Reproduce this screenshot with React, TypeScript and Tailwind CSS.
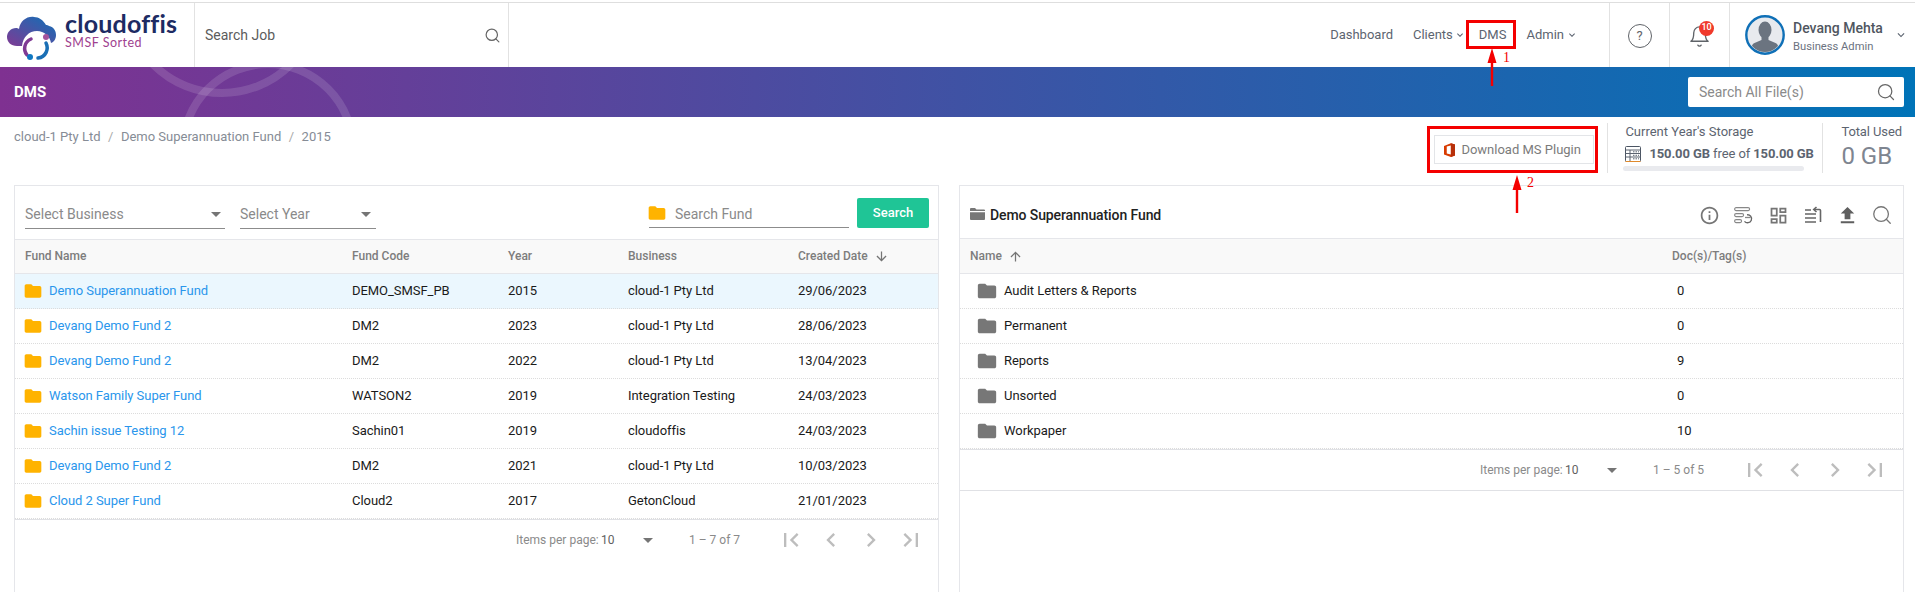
import React from "react";
import {
  MdArrowDownward,
  MdArrowUpward,
  MdChevronLeft,
  MdChevronRight,
  MdFileUpload,
  MdFirstPage,
  MdFolder,
  MdInfoOutline,
  MdKeyboardArrowDown,
  MdLastPage,
  MdOutlineDashboard,
} from "react-icons/md";
import { LuBell, LuSearch } from "react-icons/lu";

const funds = [
  { name: "Demo Superannuation Fund", code: "DEMO_SMSF_PB", year: "2015", business: "cloud-1 Pty Ltd", date: "29/06/2023" },
  { name: "Devang Demo Fund 2", code: "DM2", year: "2023", business: "cloud-1 Pty Ltd", date: "28/06/2023" },
  { name: "Devang Demo Fund 2", code: "DM2", year: "2022", business: "cloud-1 Pty Ltd", date: "13/04/2023" },
  { name: "Watson Family Super Fund", code: "WATSON2", year: "2019", business: "Integration Testing", date: "24/03/2023" },
  { name: "Sachin issue Testing 12", code: "Sachin01", year: "2019", business: "cloudoffis", date: "24/03/2023" },
  { name: "Devang Demo Fund 2", code: "DM2", year: "2021", business: "cloud-1 Pty Ltd", date: "10/03/2023" },
  { name: "Cloud 2 Super Fund", code: "Cloud2", year: "2017", business: "GetonCloud", date: "21/01/2023" },
];

const folders = [
  { name: "Audit Letters & Reports", docs: "0" },
  { name: "Permanent", docs: "0" },
  { name: "Reports", docs: "9" },
  { name: "Unsorted", docs: "0" },
  { name: "Workpaper", docs: "10" },
];

const Logo = () => (
  <svg width="56" height="52" viewBox="0 0 56 52" className="shrink-0">
    <defs>
      <linearGradient id="cloudGrad" x1="0" y1="1" x2="1" y2="0">
        <stop offset="0" stopColor="#7f3a94" />
        <stop offset="1" stopColor="#0f70b7" />
      </linearGradient>
    </defs>
    <path
      d="M11 36c-6 0-10-4-10-9 0-5 4-9 9-9 1 0 2 0 3 1 1-8 8-13 15-12 5 0 9 3 12 8 1 0 2 0 3 1 5 1 7 5 7 9 0 4-2 7-5 8-1-7-7-12-14-12-8 0-14 6-15 15h-5z"
      fill="url(#cloudGrad)"
    />
    <path d="M21 45c-4-5-3-13 4-16" fill="none" stroke="#7f3a94" strokeWidth="3.5" strokeLinecap="round" />
    <path d="M40 33c3 6 0 14-8 15" fill="none" stroke="#1b6fb5" strokeWidth="3.5" strokeLinecap="round" />
    <circle cx="40" cy="27" r="3" fill="#a4529c" />
    <circle cx="24" cy="47" r="3" fill="#0f78c2" />
  </svg>
);

const HelpIcon = () => (
  <span className="flex h-[24px] w-[24px] items-center justify-center rounded-full border-[1.5px] border-[#5f6368] text-[13px] text-[#5f6368]">
    ?
  </span>
);

const Avatar = () => (
  <svg width="40" height="40" viewBox="0 0 40 40" className="shrink-0">
    <circle cx="20" cy="20" r="18.7" fill="#e8eaee" stroke="#0f70b7" strokeWidth="2.4" />
    <clipPath id="avatarClip">
      <circle cx="20" cy="20" r="17" />
    </clipPath>
    <g clipPath="url(#avatarClip)" fill="#6b7480">
      <ellipse cx="20" cy="15" rx="6.5" ry="8.5" />
      <path d="M16.5 21h7v4l7 3c3 1.5 3.5 5 3.5 10H6c0-5 .5-8.500 3.500-10l7-3z" />
    </g>
  </svg>
);

const OfficeIcon = () => (
  <svg width="11" height="14" viewBox="0 0 12 15">
    <path d="M0 3l7.500-3L12 1.500v12L7.500 15 0 12.300z" fill="#d83b01" />
    <path d="M3 3.800l4.500-1.300v10L3 11.400z" fill="#fff" />
    <path d="M7.500 0L12 1.500v12L7.500 15z" fill="#b7300a" />
  </svg>
);

const StorageIcon = () => (
  <svg width="16" height="16" viewBox="0 0 16 16" fill="none" stroke="#5c6470" strokeWidth="1">
    <rect x="0.500" y="0.500" width="15" height="15" rx="1" stroke="#4b5563" />
    <path d="M0.500 4h15M0.500 7.500h15M0.500 11h15M5 4v11.500" />
    <path d="M8 5.800h6M8 9.300h6M8 12.800h6" strokeDasharray="1.500 1" />
    <path d="M0.500 15.500h15" stroke="#e08a2c" />
  </svg>
);

const ListRefreshIcon = () => (
  <svg width="19" height="17" viewBox="0 0 19 17" fill="none" stroke="#888" strokeWidth="1.100">
    <rect x="0.600" y="0.600" width="15" height="3" rx="1.500" />
    <rect x="0.600" y="6.600" width="9" height="3" rx="1.500" />
    <rect x="0.600" y="12.600" width="7" height="3" rx="1.500" />
    <path d="M11 10.500h5.500" strokeWidth="1.300" />
    <path d="M13 7.800a4 4 0 1 1-2.500 6.500" strokeWidth="1.300" stroke="#666" />
  </svg>
);

const SortIcon = () => (
  <svg width="18" height="18" viewBox="0 0 18 18" fill="none" stroke="#666" strokeWidth="1.600">
    <path d="M1 4h6M1 8h11M1 12h11M1 16h11" />
    <path d="M10 3.500h5.500a1 1 0 0 1 1 1V16" />
    <path d="M12.500 1l-2.800 2.500 2.800 2.500" />
  </svg>
);

const OpenFolderIcon = () => (
  <svg width="15" height="12" viewBox="0 0 15 12" className="-mt-[3px]">
    <path d="M0 1a1 1 0 0 1 1-1h4l1.500 1.500H14a1 1 0 0 1 1 1V3H0z" fill="#777" />
    <path d="M0 4.200h15V11a1 1 0 0 1-1 1H1a1 1 0 0 1-1-1z" fill="#777" />
  </svg>
);

const Caret = () => (
  <span className="h-0 w-0 border-x-[5px] border-t-[5px] border-x-transparent border-t-[#757575]" />
);

const Pager = ({ range, left }: { range: string; left: string }) => (
  <div className={`flex h-full items-center text-[12px] text-[#8a8a8a] ${left}`}>
    <span className="w-[85px] whitespace-nowrap">Items per page:</span>
    <span className="w-[42px] text-[#5f5f5f]">10</span>
    <Caret />
    <span className="ml-[36px] w-[60px] whitespace-nowrap">{range}</span>
    <div className="ml-[28px] flex gap-[12px] text-[#bdbdbd]">
      <MdFirstPage size={28} />
      <MdChevronLeft size={28} />
      <MdChevronRight size={28} />
      <MdLastPage size={28} />
    </div>
  </div>
);

const RedArrow = ({ className }: { className: string }) => (
  <svg width="10" height="38" viewBox="0 0 10 38" className={`absolute ${className}`}>
    <path d="M5 0l4.500 15H6.200v23H3.800V15H.5z" fill="#f40000" />
  </svg>
);

const ToolIcon = ({ children }: { children: React.ReactNode }) => (
  <span className="flex w-[34.500px] justify-center">{children}</span>
);

export default function App() {
  return (
    <div className="relative h-[592px] w-full overflow-hidden bg-white pt-[2px] font-['Roboto',sans-serif]">
      {/* Top bar */}
      <header className="flex h-[65px] border-t border-[#dedede]">
        <div className="flex w-[195px] items-center gap-[3px] border-r border-[#e2e2e2] pl-[6px] pt-[1px]">
          <Logo />
          <div className="flex flex-col pb-[11px]">
            <span className="text-[25px] font-bold leading-[26px] tracking-[0.2px] text-[#1d2b63] font-['Lato',sans-serif]">
              cloudoffis
            </span>
            <span className="text-[12.500px] leading-[14px] tracking-[0.5px] text-[#a0418f] font-['Lato',sans-serif]">
              SMSF Sorted
            </span>
          </div>
        </div>
        <div className="flex w-[314px] items-center justify-between border-r border-[#e2e2e2] pl-[10px] pr-[7px]">
          <span className="text-[14px] text-[#5c5c5c]">Search Job</span>
          <LuSearch size={17} strokeWidth={1.7} className="text-[#666]" />
        </div>
        <nav className="flex flex-1 items-center justify-end pr-[31px] text-[13px] text-[#5c6470]">
          <span>Dashboard</span>
          <span className="ml-[20px]">Clients</span>
          <MdKeyboardArrowDown size={12} className="ml-[1px]" />
          <span className="ml-[13px]">DMS</span>
          <span className="ml-[20px]">Admin</span>
          <MdKeyboardArrowDown size={12} className="ml-[2px]" />
        </nav>
        <div className="flex w-[60px] items-center justify-center border-l border-[#e2e2e2] pt-[2px]">
          <HelpIcon />
        </div>
        <div className="flex w-[60px] items-center justify-center border-l border-[#e2e2e2] pt-[2px]">
          <div className="relative">
            <LuBell size={23} strokeWidth={1.4} className="text-[#5f6368]" />
            <span className="absolute -right-[3px] -top-[4px] flex h-[15px] w-[15px] items-center justify-center rounded-full bg-[#f0392b] text-[9px] font-medium text-white">
              10
            </span>
          </div>
        </div>
        <div className="flex w-[186px] items-center border-l border-[#e2e2e2] pl-[15px]">
          <Avatar />
          <div className="ml-[8px] flex flex-col pt-[4px]">
            <span className="text-[14px] font-medium leading-[18px] text-[#4f5660]">Devang Mehta</span>
            <span className="mt-[2px] text-[11.200px] leading-[16px] text-[#6b7280]">Business Admin</span>
          </div>
          <MdKeyboardArrowDown size={14} className="ml-[11px] text-[#5c6470]" />
        </div>
      </header>

      {/* Title banner */}
      <div className="relative flex h-[50px] items-center justify-between overflow-hidden bg-[linear-gradient(90deg,#7f3191,#0073b7)] pl-[14px] pr-[11px]">
        <svg width="420" height="50" viewBox="0 0 420 50" fill="none" stroke="#fff" strokeOpacity="0.13" strokeWidth="8" className="absolute left-0 top-0">
          <circle cx="222" cy="-71" r="97" />
          <circle cx="268" cy="82" r="85" />
        </svg>
        <span className="relative text-[15px] font-bold text-white">DMS</span>
        <div className="relative flex h-[30px] w-[216px] items-center justify-between rounded-[2px] bg-white pl-[11px] pr-[8px]">
          <span className="text-[14px] text-[#8a8a8a]">Search All File(s)</span>
          <LuSearch size={20} strokeWidth={1.5} className="text-[#666]" />
        </div>
      </div>

      {/* Breadcrumb and storage */}
      <div className="flex h-[68px] justify-between">
        <div className="flex gap-[7.500px] pl-[14px] pt-[11px] text-[13px] leading-[18px] text-[#868c96]">
          <span>cloud-1 Pty Ltd</span>
          <span className="text-[#aaa]">/</span>
          <span>Demo Superannuation Fund</span>
          <span className="text-[#aaa]">/</span>
          <span>2015</span>
        </div>
        <div className="flex pr-[13px] pt-[6px]">
          <div className="mt-[12px] flex h-[29px] w-[160px] items-center gap-[6px] border border-[#e3e5e8] pl-[9px] text-[13px] text-[#7b7b7b]">
            <OfficeIcon />
            <span className="whitespace-nowrap">Download MS Plugin</span>
          </div>
          <div className="ml-[13px] h-[50px] w-[215px] border-l border-[#e2e2e2] pl-[17px] pt-[1px]">
            <div className="text-[13px] leading-[16px] text-[#5c6470]">Current Year's Storage</div>
            <div className="mt-[6px] flex items-center gap-[8px] whitespace-nowrap text-[13px] leading-[16px] tracking-[-0.1px] text-[#5c6470]">
              <StorageIcon />
              <span>
                <b className="font-bold">150.00 GB</b> free of <b className="font-bold">150.00 GB</b>
              </span>
            </div>
            <div className="mt-[4px] -ml-[2px] h-[5px] w-[181px] rounded-full bg-[#e9eaee]" />
          </div>
          <div className="h-[50px] border-l border-[#e2e2e2] pl-[18px] pt-[1px]">
            <div className="whitespace-nowrap text-[13px] leading-[16px] tracking-[-0.1px] text-[#5c6470]">Total Used</div>
            <div className="mt-[2px] whitespace-nowrap text-[24px] leading-[28px] text-[#7e8590]">0 GB</div>
          </div>
        </div>
      </div>

      {/* Cards */}
      <div className="flex gap-[20px] pl-[14px]">
        <section className="h-[420px] w-[925px] border border-[#e5e6ea]">
          <div className="flex h-[53px] items-start pl-[10px] pt-[13px] text-[14px] text-[#8a8a8a]">
            <div className="flex h-[30px] w-[200px] items-center justify-between border-b border-[#8c8c8c] pr-[4px] pt-[1px]">
              <span>Select Business</span>
              <Caret />
            </div>
            <div className="ml-[15px] flex h-[30px] w-[136px] items-center justify-between border-b border-[#8c8c8c] pr-[5px] pt-[1px]">
              <span>Select Year</span>
              <Caret />
            </div>
            <div className="ml-[273px] flex h-[29px] w-[200px] items-center border-b border-[#8c8c8c] pt-[3px]">
              <MdFolder size={20} className="-ml-[2px] -mt-[3px] text-[#ffb300]" />
              <span className="ml-[8px]">Search Fund</span>
            </div>
            <button className="-mt-[1px] ml-[8px] h-[30px] w-[72px] rounded-[2px] bg-[#1fc596] text-[13px] font-medium text-white">
              Search
            </button>
          </div>
          <div className="grid h-[35px] grid-cols-[337px_156px_120px_170px_1fr] items-center border-y border-[#e5e6ea] bg-[#f9f9f9] pb-[2px] text-[12px] font-medium text-[#7d7d7d]">
            <span className="pl-[10px]">Fund Name</span>
            <span>Fund Code</span>
            <span>Year</span>
            <span>Business</span>
            <span className="flex items-center gap-[6px]">
              Created Date <MdArrowDownward size={15} className="mt-[2px] text-[#757575]" />
            </span>
          </div>
          {funds.map((f, i) => (
            <div
              key={i}
              className={`grid h-[35px] grid-cols-[337px_156px_120px_170px_1fr] items-center border-b border-dotted border-[#dcdcdc] text-[13px] tracking-[-0.05px] text-[#1a1a1a] ${
                i === 0 ? "bg-[#ebf7fe]" : ""
              }`}
            >
              <span className="flex items-center gap-[6px] pl-[8px] text-[#2a96ec]">
                <MdFolder size={20} className="text-[#ffb300]" />
                {f.name}
              </span>
              <span>{f.code}</span>
              <span>{f.year}</span>
              <span>{f.business}</span>
              <span>{f.date}</span>
            </div>
          ))}
          <div className="h-[41px] border-t border-[#e0e1e5]">
            <Pager range="1 – 7 of 7" left="pl-[501px]" />
          </div>
        </section>

        <section className="h-[420px] w-[945px] border border-[#e5e6ea]">
          <div className="flex h-[52px] items-center justify-between pl-[10px] pr-[4px] pt-[6px]">
            <div className="flex items-center gap-[5px] text-[14px] font-medium tracking-[-0.1px] text-[#222]">
              <OpenFolderIcon />
              Demo Superannuation Fund
            </div>
            <div className="flex items-center text-[#757575]">
              <ToolIcon>
                <MdInfoOutline size={21} />
              </ToolIcon>
              <ToolIcon>
                <ListRefreshIcon />
              </ToolIcon>
              <ToolIcon>
                <MdOutlineDashboard size={21} />
              </ToolIcon>
              <ToolIcon>
                <SortIcon />
              </ToolIcon>
              <ToolIcon>
                <MdFileUpload size={23} className="text-[#5f5f5f]" />
              </ToolIcon>
              <ToolIcon>
                <LuSearch size={22} strokeWidth={1.4} />
              </ToolIcon>
            </div>
          </div>
          <div className="grid h-[36px] grid-cols-[712px_1fr] items-center border-y border-[#e5e6ea] bg-[#f9f9f9] text-[12px] font-medium text-[#7d7d7d]">
            <span className="flex items-center gap-[6px] pl-[10px]">
              Name <MdArrowUpward size={15} className="text-[#757575]" />
            </span>
            <span>Doc(s)/Tag(s)</span>
          </div>
          {folders.map((f) => (
            <div
              key={f.name}
              className="grid h-[35px] grid-cols-[712px_1fr] items-center border-b border-dotted border-[#dcdcdc] text-[13px] tracking-[-0.05px] text-[#1a1a1a]"
            >
              <span className="flex items-center gap-[6px] pl-[16px]">
                <MdFolder size={22} className="text-[#777]" />
                {f.name}
              </span>
              <span className="pl-[5px]">{f.docs}</span>
            </div>
          ))}
          <div className="h-[42px] border-y border-[#e0e1e5]">
            <Pager range="1 – 5 of 5" left="pl-[520px]" />
          </div>
        </section>
      </div>

      {/* Red annotations */}
      <div className="absolute left-[1466px] top-[20px] h-[29px] w-[50px] border-[3px] border-[#f40000]" />
      <div className="absolute left-[1427px] top-[126px] h-[47px] w-[171px] border-[3px] border-[#f40000]" />
      <RedArrow className="left-[1487px] top-[48px]" />
      <RedArrow className="left-[1512px] top-[175px]" />
      <span className="absolute left-[1503px] top-[50px] text-[14px] leading-[16px] text-[#f40000] font-['Liberation_Serif',serif]">1</span>
      <span className="absolute left-[1527px] top-[175px] text-[14px] leading-[16px] text-[#f40000] font-['Liberation_Serif',serif]">2</span>
    </div>
  );
}
